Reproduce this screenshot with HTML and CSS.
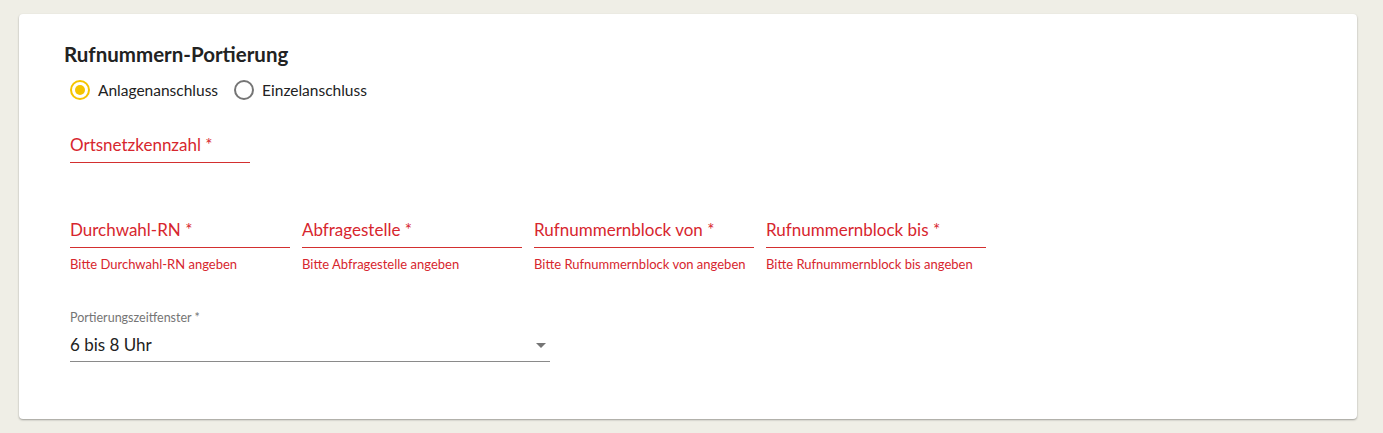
FILE: index.html
```html
<!DOCTYPE html>
<html lang="de">
<head>
    <meta charset="UTF-8">
    <meta name="viewport" content="width=device-width, initial-scale=1.0">
    <title>Rufnummern-Portierung</title>
    <link rel="stylesheet" href="styles.css">
</head>
<body>
    <div class="card">
        <h2 class="title">Rufnummern-Portierung</h2>

        <div class="radio-group">
            <label class="radio checked">
                <span class="radio-circle"><span class="radio-dot"></span></span>
                Anlagenanschluss
            </label>
            <label class="radio">
                <span class="radio-circle"></span>
                Einzelanschluss
            </label>
        </div>

        <!-- Ortsnetzkennzahl -->
        <div class="row row-first">
            <div class="field field-small error">
                <div class="field-label">Ortsnetzkennzahl *</div>
            </div>
        </div>

        <!-- Durchwahl / Block -->
        <div class="row row-fields">
            <div class="field error">
                <div class="field-label">Durchwahl-RN *</div>
                <div class="helper">Bitte Durchwahl-RN angeben</div>
            </div>
            <div class="field error">
                <div class="field-label">Abfragestelle *</div>
                <div class="helper">Bitte Abfragestelle angeben</div>
            </div>
            <div class="field error">
                <div class="field-label">Rufnummernblock von *</div>
                <div class="helper">Bitte Rufnummernblock von angeben</div>
            </div>
            <div class="field error">
                <div class="field-label">Rufnummernblock bis *</div>
                <div class="helper">Bitte Rufnummernblock bis angeben</div>
            </div>
        </div>

        <div class="select">
            <div class="select-label">Portierungszeitfenster *</div>
            <div class="select-value">
                <span>6 bis 8 Uhr</span>
                <span class="select-arrow"></span>
            </div>
        </div>
    </div>
</body>
</html>
```

FILE: styles.css
```css
body {
    margin: 0;
    padding: 14px 26px 14px 19px;
    background-color: #efeee6;
    font-family: "Lato", "Open Sans", sans-serif;
    color: #222;
}

.card {
    background-color: #fff;
    border-radius: 4px;
    box-shadow: 0 1px 2px rgba(0, 0, 0, 0.35);
    padding: 28px 45px 0 45px;
    height: 405px;
    box-sizing: border-box;
}

.title {
    margin: 0;
    font-size: 20.5px;
    font-weight: 700;
    color: #222;
    line-height: 24px;
}

.radio-group {
    display: flex;
    gap: 16px;
    margin-top: 14px;
    padding-left: 6px;
}

.radio {
    display: flex;
    align-items: center;
    gap: 8px;
    font-size: 15.5px;
    color: #222;
    line-height: 20px;
}

.radio-circle {
    width: 20px;
    height: 20px;
    border: 2px solid #757575;
    border-radius: 50%;
    box-sizing: border-box;
    display: flex;
    align-items: center;
    justify-content: center;
}

.radio.checked .radio-circle {
    border-color: #f5c400;
}

.radio-dot {
    width: 10px;
    height: 10px;
    border-radius: 50%;
    background-color: #f5c400;
}

.row {
    display: flex;
    gap: 12px;
    padding-left: 6px;
}

.row-first {
    margin-top: 33px;
}

.row-fields {
    margin-top: 55px;
}

.field {
    width: 220px;
}

.field-small {
    width: 180px;
}

.field-label {
    font-size: 17px;
    line-height: 24px;
    padding-bottom: 5px;
    border-bottom: 1px solid #d32f2f;
}

.error .field-label {
    color: #d7262e;
}

.helper {
    font-size: 13px;
    color: #d7262e;
    margin-top: 8px;
    line-height: 16px;
}

.select {
    width: 480px;
    margin-top: 38px;
    margin-left: 6px;
}

.select-label {
    font-size: 12.5px;
    color: #757575;
    line-height: 16px;
}

.select-value {
    display: flex;
    justify-content: space-between;
    align-items: center;
    font-size: 17px;
    line-height: 24px;
    padding: 7px 0 4px;
    border-bottom: 1px solid #8a8a8a;
    color: #222;
}

.select-arrow {
    width: 0;
    height: 0;
    border-left: 5px solid transparent;
    border-right: 5px solid transparent;
    border-top: 5px solid #757575;
    margin-right: 4px;
}
```
